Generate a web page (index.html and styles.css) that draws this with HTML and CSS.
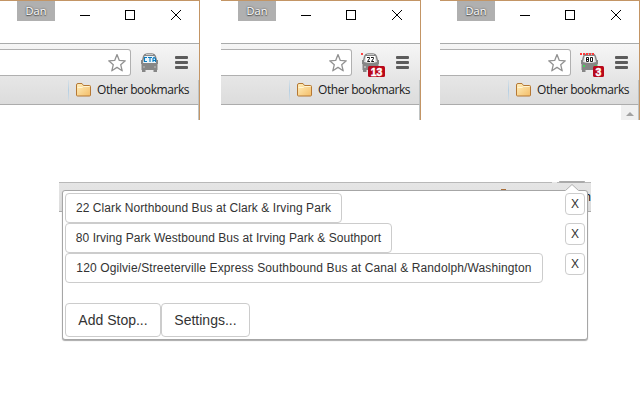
FILE: index.html
```html
<!DOCTYPE html>
<html lang="en">
<head>
<meta charset="utf-8">
<title>Bus tracker extension</title>
<link rel="stylesheet" href="styles.css">
</head>
<body>
<svg class="defs" width="0" height="0">
  <defs>
    <linearGradient id="fold" x1="0" y1="0" x2="1" y2="1"><stop offset="0" stop-color="#fff0bf"/><stop offset="1" stop-color="#f4bd68"/></linearGradient>
    <symbol id="star" viewBox="0 0 20 20"><path d="M10 1.6 12.3 7.4 18.3 7.8 13.7 11.7 15.2 17.8 10 14.4 4.8 17.8 6.3 11.7 1.7 7.8 7.7 7.4Z" fill="#fff" stroke="#929292" stroke-width="1.3" stroke-linejoin="round"/></symbol>
    <symbol id="folder" viewBox="0 0 16 14"><path d="M.5 12V2Q.5.5 2 .5H6L7.5 2.5H13.5Q14.5 2.5 14.5 3.5V12Q14.5 13 13.5 13H1.5Q.5 13 .5 12Z" fill="url(#fold)" stroke="#b57834"/><path d="M1.500 4.500H6L7.500 3.500H13.500" fill="none" stroke="#fff4d2"/></symbol>
    <symbol id="bus" viewBox="0 0 20 20"><path d="M1 8H2L3 4Q4 1.500 7 1.300H12Q15 1.500 16 4L17 8H18V12H17.500V18H17V20H13.500V18H5.500V20H2V18H1.500V12H1Z" fill="#868686"/><path d="M6 2.500H13" stroke="#c8c8c8"/></symbol>
  </defs>
</svg>
<main class="page">
  <div class="windows">
    <section class="window">
      <header class="titlebar"><span class="user">Dan</span>
        <svg class="controls" viewBox="0 0 104 12" shape-rendering="crispEdges"><path d="M0 6.5H10M45.500 1.500H54.500V10.500H45.500Z" fill="none" stroke="#000"/><path d="M91 1 101 11M101 1 91 11" stroke="#000" shape-rendering="auto"/></svg>
      </header>
      <div class="toolbar">
        <div class="address"><svg class="star"><use href="#star"/></svg></div>
        <svg class="ext" viewBox="0 0 28 26"><use href="#bus" width="20" height="20"/><path d="M4.500 4H14.500L16 11H3Z" fill="#e9f5fc"/><path d="M7 5.500H4.500V9.500H7M8 5.500H12M10 5.500V10M13 10V6.500L14 5.500 15.500 6.500V10M13 8.500H15.500" fill="none" stroke="#0879be" stroke-width="1.1"/><path d="M3 14H5V16H3ZM14 14H16V16H14Z" fill="#a2a2a2"/></svg>
        <div class="menu"><i></i><i></i><i></i></div>
      </div>
      <div class="bookmarks"><span class="divider"></span><svg class="folder"><use href="#folder"/></svg><span class="label">Other bookmarks</span></div>
      <div class="content"></div>
    </section>
    <section class="window">
      <header class="titlebar"><span class="user">Dan</span>
        <svg class="controls" viewBox="0 0 104 12" shape-rendering="crispEdges"><path d="M0 6.5H10M45.500 1.500H54.500V10.500H45.500Z" fill="none" stroke="#000"/><path d="M91 1 101 11M101 1 91 11" stroke="#000" shape-rendering="auto"/></svg>
      </header>
      <div class="toolbar">
        <div class="address"><svg class="star"><use href="#star"/></svg></div>
        <svg class="ext" viewBox="0 0 28 26"><use href="#bus" width="20" height="20"/><path d="M4.500 4H14.500L16 10Q9.500 12 3 10Z" fill="#e5e5e5"/><path d="M5 4H14V10H5Z" fill="#fff"/><path d="M6 5.500H8.500V6.500L6.500 9.500H9M10 5.500H12.500V6.500L10.500 9.500H13" fill="none" stroke="#000" stroke-width=".9"/><path d="M0 1H2V3H0Z" fill="#ff4545"/><path d="M3 14H5V16H3Z" fill="#b5b5b5"/><rect x="7" y="14" width="17" height="11" rx="1.500" fill="#b9081b"/><text class="count" x="15.500" y="23.500">13</text></svg>
        <div class="menu"><i></i><i></i><i></i></div>
      </div>
      <div class="bookmarks"><span class="divider"></span><svg class="folder"><use href="#folder"/></svg><span class="label">Other bookmarks</span></div>
      <div class="content"></div>
    </section>
    <section class="window">
      <header class="titlebar"><span class="user">Dan</span>
        <svg class="controls" viewBox="0 0 104 12" shape-rendering="crispEdges"><path d="M0 6.5H10M45.500 1.500H54.500V10.500H45.500Z" fill="none" stroke="#000"/><path d="M91 1 101 11M101 1 91 11" stroke="#000" shape-rendering="auto"/></svg>
      </header>
      <div class="toolbar">
        <div class="address"><svg class="star"><use href="#star"/></svg></div>
        <svg class="ext" viewBox="0 0 28 26"><use href="#bus" width="20" height="20"/><path d="M4.500 4H14.500L16 10Q9.500 12 3 10Z" fill="#e5e5e5"/><path d="M5 4H14V10H5Z" fill="#fff"/><path d="M6.500 5.500H8.500V9.500H6.500ZM6.500 7.500H8.500M10.500 5.500H12.500V9.500H10.500Z" fill="none" stroke="#000" stroke-width=".9"/><path d="M0 2H14" stroke="#ff3b3b" stroke-width="2" stroke-dasharray="2 1"/><path d="M3 13H5V15H3ZM15 13H17V14H15Z" fill="#45d45b"/><rect x="13" y="14" width="11" height="11" rx="1.500" fill="#b9081b"/><text class="count" x="18.500" y="23.500">3</text></svg>
        <div class="menu"><i></i><i></i><i></i></div>
      </div>
      <div class="bookmarks"><span class="divider"></span><svg class="folder"><use href="#folder"/></svg><span class="label">Other bookmarks</span></div>
      <div class="content"><span class="scroll"><svg width="8" height="4"><path d="M0 4 4 0 8 4Z" fill="#a2a2a2"/></svg></span></div>
    </section>
  </div>
  <section class="preview">
    <div class="backdrop"><span class="field-end"></span><span class="pressed"></span><span class="folder-top"></span><span class="behind">n</span></div>
    <div class="popup">
      <svg class="arrow" width="14" height="7"><path d="M0 7 7 .7 14 7Z" fill="#fff"/><path d="M.500 6.500 7 .5 13.500 6.500" fill="none" stroke="#b2b2b2"/></svg>
      <div class="row"><button class="btn stop first">22 Clark Northbound Bus at Clark &amp; Irving Park</button><button class="btn remove">X</button></div>
      <div class="row"><button class="btn stop second">80 Irving Park Westbound Bus at Irving Park &amp; Southport</button><button class="btn remove">X</button></div>
      <div class="row"><button class="btn stop third">120 Ogilvie/Streeterville Express Southbound Bus at Canal &amp; Randolph/Washington</button><button class="btn remove">X</button></div>
      <div class="actions"><button class="btn add">Add Stop...</button><button class="btn settings">Settings...</button></div>
    </div>
  </section>
</main>
</body>
</html>
```
FILE: styles.css
```css
* { box-sizing: border-box; }
body { margin: 0; background: #fff; font-family: "Liberation Sans", Arial, sans-serif; }
svg { display: block; flex: none; }
.defs { position: absolute; }
.page { width: 640px; height: 400px; overflow: hidden; }
.windows { display: grid; grid-template-columns: 200px 200px 200px; column-gap: 20px; height: 120px; }
.window:nth-child(2) { margin-left: 1px; margin-right: -1px; }
.window { height: 120px; border-top: 1px solid #c39565; border-right: 1px solid #c39565; background: #fff; }
.titlebar { display: flex; height: 42px; padding-left: 17px; }
.user { width: 38px; height: 20px; background: #b0b0b0; color: #fff; font: 11px/20px "Open Sans", sans-serif; text-align: center; text-shadow: 0 0 2px #444, 0 1px 1px #555; }
.controls { width: 104px; height: 12px; margin: 8px 0 0 25px; }
.toolbar { display: flex; height: 37px; border-top: 1px solid #a9abab; background: linear-gradient(#f6f6f6, #e5e5e5); padding-top: 5px; }
.address { display: flex; justify-content: flex-end; width: 131px; height: 27px; padding: 3px 3px 0 0; background: #fff; border: 1px solid #b0b0b0; border-left: 0; border-radius: 0 3px 3px 0; }
.star { width: 20px; height: 20px; }
.ext { width: 28px; height: 26px; margin: 3px 0 0 9px; }
.count { fill: #fff; font: bold 10.5px "Liberation Sans", Arial, sans-serif; text-anchor: middle; stroke: #fff; stroke-width: .4px; }
.menu { display: flex; flex-direction: column; gap: 2px; margin: 7px 0 0 7px; }
.menu i { width: 13px; height: 3px; border-radius: 1px; background: #5c5c5c; }
.bookmarks { display: flex; height: 25px; background: linear-gradient(#e5e5e5, #dcdcdc); border-bottom: 1px solid #acacac; border-right: 1px solid #c0c4c4; }
.divider { width: 1px; height: 21px; margin-left: 68px; background: linear-gradient(#d9e1e6, #b5cfe3, #d5dde3); }
.folder { width: 16px; height: 14px; margin: 3px 5px 0 7px; }
.label { color: #202020; font: 12px/20px "Open Sans", sans-serif; letter-spacing: -.43px; white-space: nowrap; }
.content { height: 15px; border-right: 1px solid #c0c4c4; display: flex; justify-content: flex-end; }
.scroll { display: flex; align-items: center; justify-content: center; width: 17px; padding-top: 3px; background: #f0f0f0; }
.preview { position: relative; width: 532px; margin: 62px 0 0 59px; }
.backdrop { position: relative; height: 30px; background: linear-gradient(#e5e5e5, #dcdcdc); border-top: 1px solid #b8b8b8; border-bottom: 1px solid #aaa; }
.field-end { position: absolute; left: 493px; top: -1px; width: 5px; height: 1px; background: #e9e9e9; }
.pressed { position: absolute; left: 500px; top: -2px; width: 26px; height: 2px; border-radius: 0 0 2px 2px; background: #aaa; }
.folder-top { position: absolute; left: 442px; top: 6px; width: 5px; height: 1px; background: #a86d38; }
.behind { position: absolute; right: 0; top: 5px; font: 12px/17px "Open Sans", sans-serif; }
.popup { position: absolute; left: 3px; top: 8px; width: 526px; height: 150px; padding: 2px; background: #fff; border: 1px solid #a6a6a6; border-radius: 3px; box-shadow: 0 1px 1px #aaa; }
.arrow { position: absolute; top: -7px; left: 502px; }
.row { display: flex; justify-content: space-between; height: 30px; }
.btn { margin: 0; border: 1px solid #ccc; border-radius: 4px; background: #fff; color: #333; font: 12px/18px "Liberation Sans", Arial, sans-serif; white-space: nowrap; }
.stop { height: 30px; padding: 5px 0; }
.first { width: 277px; letter-spacing: .08px; }
.second { width: 327px; letter-spacing: .05px; }
.third { width: 478px; letter-spacing: .12px; }
.remove { width: 20px; height: 22px; padding: 1px 0; }
.actions { display: flex; margin-top: 20px; }
.actions .btn { height: 34px; padding: 6px 0; font-size: 14px; line-height: 20px; }
.add { width: 96px; }
.settings { width: 89px; }
```
